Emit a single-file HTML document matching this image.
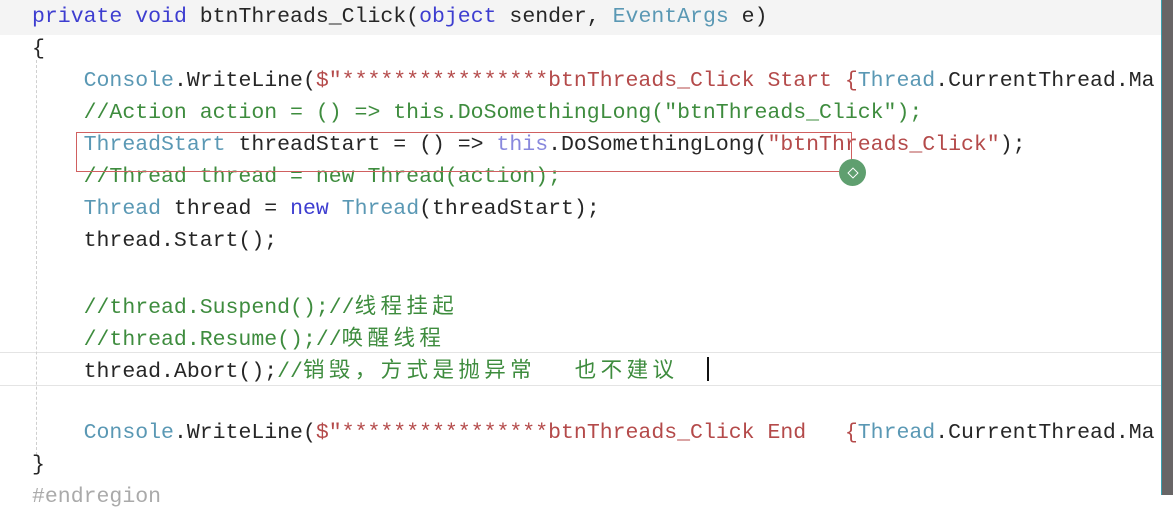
<!DOCTYPE html>
<html><head><meta charset="utf-8"><style>
html,body{margin:0;padding:0;}
body{width:1173px;height:495px;overflow:hidden;background:#fff;position:relative;font-family:"Liberation Mono","Noto Sans CJK SC",monospace;font-size:21.5px;color:#262626;}
.l{position:absolute;left:32px;height:32px;line-height:32px;white-space:pre;}
.k{color:#3d3dd0}.t{color:#5a98b4}.s{color:#b44a4a}.c{color:#3e8c3e}
.z{font-family:"Noto Sans CJK SC",sans-serif;font-size:21.5px;letter-spacing:4.4px;}
</style></head><body>
<div style="position:absolute;left:0;top:0;width:1162px;height:35px;background:#f4f4f4"></div>
<div style="position:absolute;left:0;top:352px;width:1162px;height:32px;border-top:1px solid #e4e4e4;border-bottom:1px solid #e4e4e4"></div>
<div style="position:absolute;left:36px;top:60px;height:395px;border-left:1px dashed #cfcfcf"></div>
<div class="l" style="top:1px"><span class="k">private</span> <span class="k">void</span> btnThreads_Click(<span class="k">object</span> sender, <span class="t">EventArgs</span> e)</div>
<div class="l" style="top:33px">{</div>
<div class="l" style="top:65px">    <span class="t">Console</span>.WriteLine(<span class="s">$"****************btnThreads_Click Start {</span><span class="t">Thread</span>.CurrentThread.Ma</div>
<div class="l" style="top:97px">    <span class="c">//Action action = () =&gt; this.DoSomethingLong("btnThreads_Click");</span></div>
<div class="l" style="top:129px">    <span class="t">ThreadStart</span> threadStart = () =&gt; <span class="k" style="color:#8888dd">this</span>.DoSomethingLong(<span class="s">"btnThreads_Click"</span>);</div>
<div class="l" style="top:161px">    <span class="c">//Thread thread = new Thread(action);</span></div>
<div class="l" style="top:193px">    <span class="t">Thread</span> thread = <span class="k">new</span> <span class="t">Thread</span>(threadStart);</div>
<div class="l" style="top:225px">    thread.Start();</div>
<div class="l" style="top:289px">    <span class="c">//thread.Suspend();//<span class="z">线程挂起</span></span></div>
<div class="l" style="top:321px">    <span class="c">//thread.Resume();//<span class="z">唤醒线程</span></span></div>
<div class="l" style="top:353px">    thread.Abort();<span class="c">//<span class="z">销毁，方式是抛异常</span>   <span class="z">也不建议</span></span></div>
<div style="position:absolute;left:707px;top:357px;width:2px;height:24px;background:#111"></div>
<div class="l" style="top:417px">    <span class="t">Console</span>.WriteLine(<span class="s">$"****************btnThreads_Click End   {</span><span class="t">Thread</span>.CurrentThread.Ma</div>
<div class="l" style="top:449px">}</div>
<div class="l" style="top:481px;color:#aaa">#endregion</div>
<div style="position:absolute;left:76px;top:132px;width:776px;height:40px;border:1.5px solid #d06060;box-sizing:border-box"></div>
<div style="position:absolute;left:839px;top:159px;width:27px;height:27px;border-radius:50%;background:#5f9f6f"></div>
<div style="position:absolute;left:849px;top:169px;width:6px;height:6px;border:1px solid #fff;transform:rotate(45deg)"></div>
<div style="position:absolute;left:1161px;top:0;width:1px;height:495px;background:#3aa0b0"></div>
<div style="position:absolute;left:1162px;top:0;width:11px;height:495px;background:#686566"></div>
</body></html>
